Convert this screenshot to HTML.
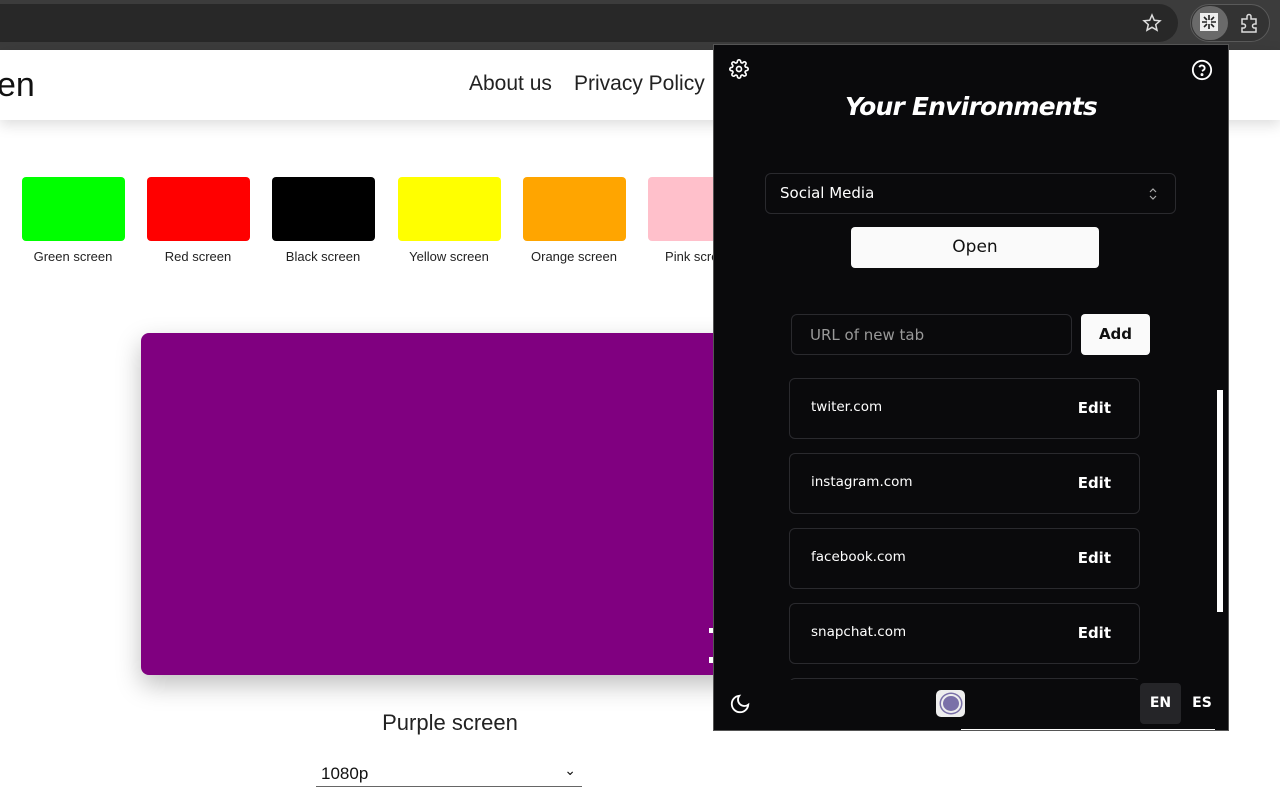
<!DOCTYPE html>
<html><head><style>
*{box-sizing:border-box;margin:0;padding:0}
body{width:1280px;height:800px;overflow:hidden;background:#fff;font-family:"Liberation Sans",sans-serif;position:relative}
.top{position:absolute;left:0;top:0;width:1280px;height:50px;background:#3c3c3c}
.omni{position:absolute;left:-20px;top:4px;width:1198px;height:38px;background:#282828;border-radius:19px}
.ext{position:absolute;left:1190px;top:4px;width:80px;height:38px;border-radius:19px;border:1px solid #5a5a5a;background:#333}
.ext .a{position:absolute;left:1px;top:1px;width:36px;height:34px;border-radius:17px;background:#6a6a6a}
.hdr{position:absolute;left:0;top:50px;width:1280px;height:70px;background:#fff;box-shadow:0 4px 14px rgba(0,0,0,.15)}
.sw{position:absolute;top:177px;width:103px;height:64px;border-radius:4px}
.lb{position:absolute;top:249px;width:120px;text-align:center;font-size:13px;color:#222}
.pop{position:absolute;left:713px;top:44px;width:516px;height:687px;background:#0a0a0c;border:1px solid #555;font-family:"DejaVu Sans","Liberation Sans",sans-serif;color:#fff;overflow:hidden}
.box{position:absolute;border:1px solid #2a2a2e;border-radius:6px}
.item{position:absolute;left:75px;width:351px;height:61px;border:1px solid #2a2a2e;border-radius:6px}
.item span{position:absolute;left:21px;top:20px;font-size:13.5px}
.item b{position:absolute;right:28px;top:20px;font-size:15px;font-weight:600}
</style></head><body>
<div class="top"><div class="omni"></div>
<svg style="position:absolute;left:1142px;top:13px" width="20" height="20" viewBox="0 0 20 20"><path d="M10 2l2.3 5.3 5.7.5-4.3 3.8 1.3 5.6L10 14.3 5 17.2l1.3-5.6L2 7.8l5.7-.5z" fill="none" stroke="#ddd" stroke-width="1.5"/></svg>
<div class="ext"><div class="a"></div>
<svg style="position:absolute;left:8px;top:7px" width="20" height="20" viewBox="0 0 20 20"><rect x="1" y="1" width="18" height="18" fill="#eee"/><path d="M10 3v5M10 12v5M3 10h5M12 10h5M5 5l3 3M12 12l3 3M15 5l-3 3M8 12l-3 3" stroke="#222" stroke-width="1.6"/></svg>
<svg style="position:absolute;left:48px;top:8px" width="22" height="22" viewBox="0 0 22 22"><path d="M3 6h5V3.5a2 2 0 014 0V6h5v5h-1.5a2 2 0 000 4H17v4H3v-4h1.5a2 2 0 000-4H3z" fill="none" stroke="#ddd" stroke-width="1.5"/></svg>
</div></div>
<div class="hdr">
<div style="position:absolute;left:-3px;top:16px;font-size:34px;color:#111">en</div>
<div style="position:absolute;left:469px;top:22px;font-size:21px;color:#222">About us</div>
<div style="position:absolute;left:574px;top:22px;font-size:21px;color:#222">Privacy Policy</div>
</div>
<div class="sw" style="left:22px;background:#0f0"></div><div class="lb" style="left:13px">Green screen</div>
<div class="sw" style="left:147px;background:#f00"></div><div class="lb" style="left:138px">Red screen</div>
<div class="sw" style="left:272px;background:#000"></div><div class="lb" style="left:263px">Black screen</div>
<div class="sw" style="left:398px;background:#ff0"></div><div class="lb" style="left:389px">Yellow screen</div>
<div class="sw" style="left:523px;background:#ffa500"></div><div class="lb" style="left:514px">Orange screen</div>
<div class="sw" style="left:648px;background:#ffc0cb"></div><div class="lb" style="left:639px">Pink screen</div>
<div style="position:absolute;left:141px;top:333px;width:600px;height:342px;background:#800080;border-radius:8px;box-shadow:0 10px 25px rgba(0,0,0,.25)"></div>
<div style="position:absolute;left:709px;top:628px;width:6px;height:5px;background:#fff"></div>
<div style="position:absolute;left:709px;top:657px;width:6px;height:6px;background:#fff"></div>
<div style="position:absolute;left:300px;top:710px;width:300px;text-align:center;font-size:22px;color:#222">Purple screen</div>
<div style="position:absolute;left:316px;top:762px;width:266px;height:25px;border-bottom:1px solid #666;font-size:17px;color:#111;padding:2px 5px">1080p<span style="position:absolute;right:6px;top:0;font-size:14px">&#8964;</span></div>
<div class="pop">
<svg style="position:absolute;left:15px;top:14px" width="20" height="20" viewBox="0 0 24 24" fill="none" stroke="#fff" stroke-width="2"><circle cx="12" cy="12" r="3"/><path d="M19.4 15a1.7 1.7 0 00.3 1.8l.1.1a2 2 0 11-2.8 2.8l-.1-.1a1.7 1.7 0 00-1.8-.3 1.7 1.7 0 00-1 1.5V21a2 2 0 01-4 0v-.1a1.7 1.7 0 00-1.1-1.5 1.7 1.7 0 00-1.8.3l-.1.1a2 2 0 11-2.8-2.8l.1-.1a1.7 1.7 0 00.3-1.8 1.7 1.7 0 00-1.5-1H3a2 2 0 010-4h.1a1.7 1.7 0 001.5-1.1 1.7 1.7 0 00-.3-1.8l-.1-.1a2 2 0 112.8-2.8l.1.1a1.7 1.7 0 001.8.3H9a1.7 1.7 0 001-1.5V3a2 2 0 014 0v.1a1.7 1.7 0 001 1.5 1.7 1.7 0 001.8-.3l.1-.1a2 2 0 112.8 2.8l-.1.1a1.7 1.7 0 00-.3 1.8V9a1.7 1.7 0 001.5 1H21a2 2 0 010 4h-.1a1.7 1.7 0 00-1.5 1z"/></svg>
<svg style="position:absolute;left:477px;top:14px" width="22" height="22" viewBox="0 0 24 24" fill="none" stroke="#fff" stroke-width="2"><circle cx="12" cy="12" r="10"/><path d="M9.1 9a3 3 0 015.8 1c0 2-3 3-3 3"/><circle cx="12" cy="17" r=".6" fill="#fff"/></svg>
<div style="position:absolute;left:0;width:514px;top:47px;text-align:center;font-size:25px;font-weight:bold;font-style:italic;letter-spacing:-0.8px">Your Environments</div>
<div class="box" style="left:51px;top:128px;width:411px;height:41px"><span style="position:absolute;left:14px;top:10px;font-size:15px">Social Media</span>
<svg style="position:absolute;right:18px;top:13px" width="8" height="14" viewBox="0 0 8 14" fill="none" stroke="#aaa" stroke-width="1.2"><path d="M1 5l3-3 3 3M1 9l3 3 3-3"/></svg></div>
<div style="position:absolute;left:137px;top:182px;width:248px;height:41px;background:#fafafa;border-radius:4px;color:#111;font-size:17px;text-align:center;line-height:41px">Open</div>
<div class="box" style="left:77px;top:269px;width:281px;height:41px"><span style="position:absolute;left:18px;top:11px;font-size:15px;color:#999">URL of new tab</span></div>
<div style="position:absolute;left:367px;top:269px;width:69px;height:41px;background:#fafafa;border-radius:4px;color:#111;font-size:15px;font-weight:bold;text-align:center;line-height:40px">Add</div>
<div class="item" style="top:333px"><span>twiter.com</span><b>Edit</b></div>
<div class="item" style="top:408px"><span>instagram.com</span><b>Edit</b></div>
<div class="item" style="top:483px"><span>facebook.com</span><b>Edit</b></div>
<div class="item" style="top:558px"><span>snapchat.com</span><b>Edit</b></div>
<div class="item" style="top:633px"></div>
<div style="position:absolute;left:503px;top:345px;width:6px;height:222px;background:#fff"></div>
<div style="position:absolute;left:0;top:635px;width:514px;height:50px;background:#0a0a0c"></div>
<svg style="position:absolute;left:15px;top:648px" width="22" height="22" viewBox="0 0 24 24" fill="none" stroke="#fff" stroke-width="2"><path d="M21 12.8A9 9 0 1111.2 3a7 7 0 009.8 9.8z"/></svg>
<div style="position:absolute;left:222px;top:645px;width:29px;height:27px;background:#eee;border-radius:5px"><div style="position:absolute;left:5px;top:4px;width:20px;height:19px;border-radius:50%;background:#7a70a8;border:2px solid #eee;box-shadow:0 0 0 1.5px #7a70a8"></div></div>
<div style="position:absolute;left:426px;top:638px;width:41px;height:41px;background:#252528;border-radius:4px;text-align:center;line-height:41px;font-size:14px;font-weight:bold">EN</div>
<div style="position:absolute;left:470px;top:638px;width:36px;height:41px;text-align:center;line-height:41px;font-size:14px;font-weight:bold">ES</div>
<div style="position:absolute;left:247px;top:684px;width:254px;height:1px;background:#fff"></div>
</div>
</body></html>
